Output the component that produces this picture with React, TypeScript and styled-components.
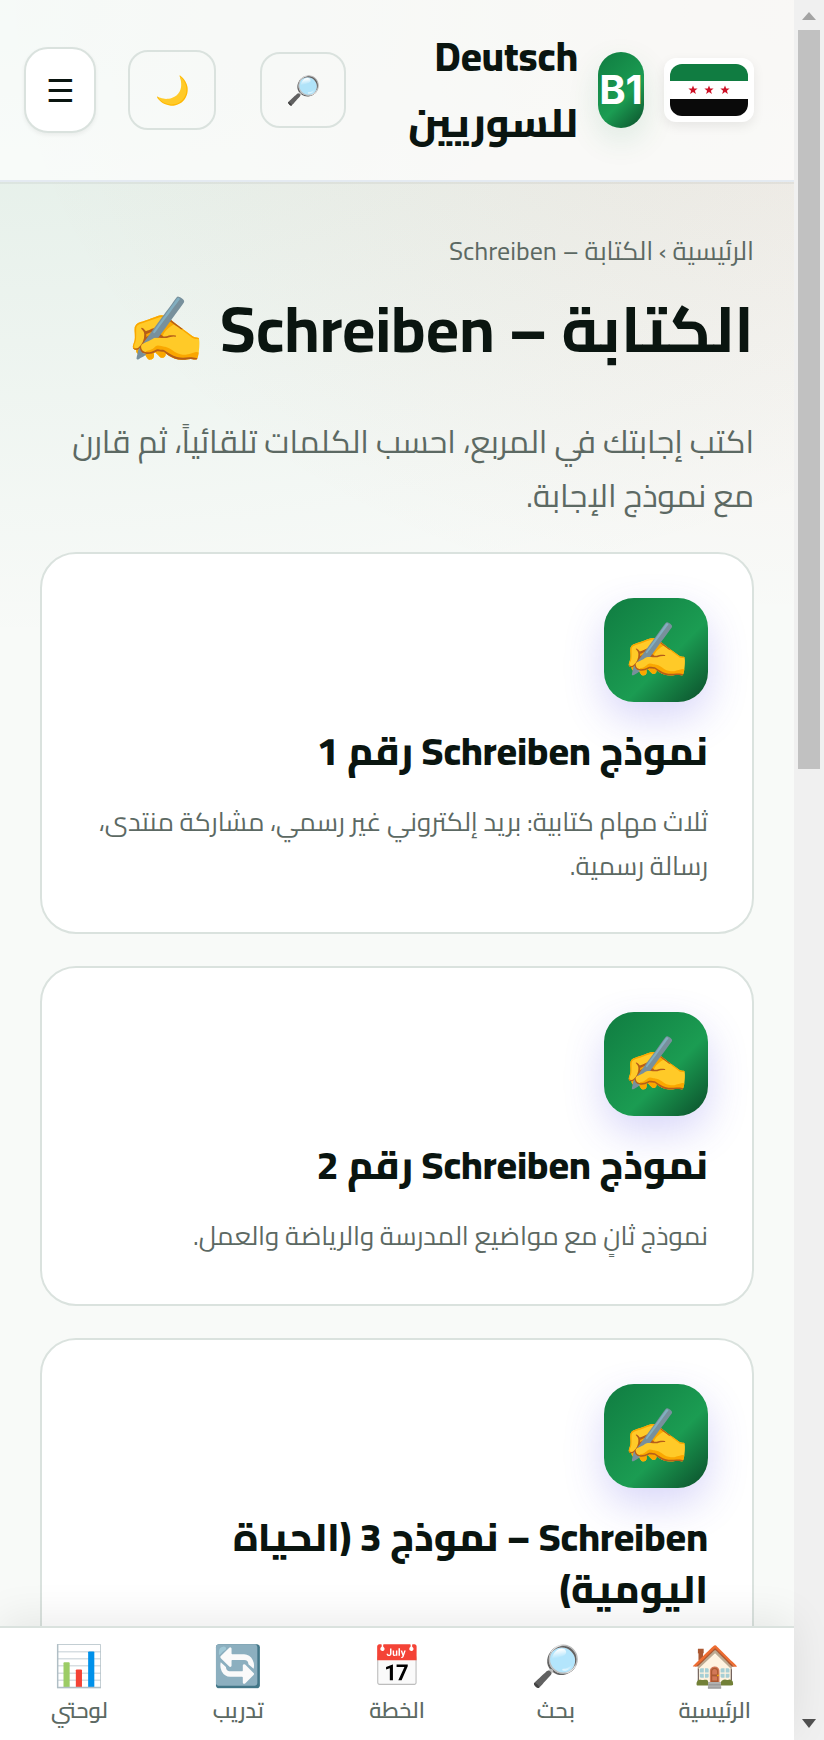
import React from 'react';
import styled, { createGlobalStyle } from 'styled-components';

const GlobalStyle = createGlobalStyle`
  *, *::before, *::after { box-sizing: border-box; }
  body {
    margin: 0;
    font-family: 'Cairo', 'Noto Sans', sans-serif;
    font-size: 32px;
    line-height: 54px;
    color: #0a1510;
    background: #f8faf8;
  }
`;

const brandGradient = 'linear-gradient(135deg, #107c41 0%, #1b9c52 60%, #0b4d2a 100%)';
const line = '#dae2de';
const muted = '#5c6963';

const Shell = styled.div`
  display: grid;
  grid-template-columns: minmax(0, 1fr) 30px;
  height: 100vh;
  overflow: hidden;
`;

const Page = styled.div`
  display: flex;
  flex-direction: column;
  min-height: 0;
  background:
    radial-gradient(800px 620px at 100% 0, rgba(190, 50, 20, 0.08), transparent 100%),
    radial-gradient(1300px 640px at 0 0, rgba(16, 124, 65, 0.1), transparent 100%),
    #f8faf8;
`;

const Header = styled.header`
  display: flex;
  align-items: center;
  flex-shrink: 0;
  padding: 24px 40px 24px 24px;
  background: rgba(255, 255, 255, 0.7);
  border-bottom: 2px solid #e4eaf1;
  box-shadow: 0 2px 0 rgba(15, 23, 20, 0.05);
`;

const Brand = styled.a`
  display: flex;
  align-items: center;
  gap: 20px;
  color: inherit;
  text-decoration: none;
`;

const FlagFrame = styled.span`
  display: flex;
  width: 90px;
  height: 64px;
  padding: 6px;
  border-radius: 12px;
  background: #fff;
  box-shadow: 0 4px 12px rgba(0, 0, 0, 0.08);
  svg { width: 78px; height: 52px; border-radius: 12px; }
`;

const Level = styled.span`
  display: grid;
  place-items: center;
  width: 46px;
  height: 76px;
  border-radius: 24px;
  background: ${brandGradient};
  box-shadow: 0 12px 32px rgba(16, 124, 65, 0.12);
  color: #fff;
  font-family: 'Inter', sans-serif;
  font-size: 40px;
  font-weight: 700;
`;

const BrandName = styled.span`
  width: 178px;
  font-size: 40px;
  font-weight: 800;
  line-height: 66px;
`;

const Actions = styled.div`
  display: flex;
  align-items: center;
  margin-inline-start: auto;
`;

const IconButton = styled.button<{ $w: number; $h: number; $gap?: number; $solid?: boolean }>`
  width: ${p => p.$w}px;
  height: ${p => p.$h}px;
  margin-inline-start: ${p => p.$gap ?? 0}px;
  padding: 0;
  border: 2px solid ${line};
  border-radius: ${p => (p.$solid ? 24 : 20)}px;
  background: ${p => (p.$solid ? '#fff' : 'transparent')};
  box-shadow: ${p => (p.$solid ? '0 2px 4px rgba(0, 0, 0, 0.06)' : 'none')};
  color: inherit;
  font-family: inherit;
  font-size: ${p => (p.$solid ? 32 : 28)}px;
  line-height: 44px;
`;

const Main = styled.main`
  flex: 1;
  min-height: 0;
  overflow: hidden;
  padding: 47px 40px 0;
`;

const Crumbs = styled.nav`
  font-size: 26px;
  line-height: 44px;
  color: ${muted};
  a { color: inherit; text-decoration: none; }
`;

const Heading = styled.h1`
  margin: 14px 0 43px;
  font-size: 64px;
  font-weight: 700;
  line-height: 84px;
`;

const Lead = styled.p`
  margin: 0 0 30px;
  color: ${muted};
`;

const CardList = styled.div`
  display: grid;
  gap: 32px;
`;

const CardLink = styled.a`
  display: block;
  min-height: 340px;
  padding: 44px;
  border: 2px solid ${line};
  border-radius: 36px;
  background: #fff;
  color: inherit;
  text-decoration: none;
`;

const CardIcon = styled.span`
  display: grid;
  place-items: center;
  width: 104px;
  height: 104px;
  border-radius: 30px;
  background: ${brandGradient};
  box-shadow: 0 16px 40px rgba(79, 70, 229, 0.22);
  font-size: 54px;
`;

const CardTitle = styled.h2`
  margin: 23px 0;
  font-size: 39px;
  font-weight: 800;
  line-height: 52px;
`;

const CardText = styled.p`
  margin: 0;
  font-size: 26px;
  line-height: 44px;
  color: ${muted};
`;

const BottomNav = styled.nav`
  position: relative;
  display: grid;
  grid-template-columns: repeat(5, minmax(0, 1fr));
  flex-shrink: 0;
  padding: 12px 0;
  border-top: 2px solid ${line};
  background: #fff;
  box-shadow: 0 -8px 40px rgba(0, 0, 0, 0.08);
`;

const Tab = styled.a`
  display: flex;
  flex-direction: column;
  align-items: center;
  color: ${muted};
  text-decoration: none;
  font-size: 22px;
  font-weight: 600;
  line-height: 36px;
`;

const TabIcon = styled.span`
  font-size: 40px;
  line-height: 52px;
`;

const ScrollTrack = styled.div`
  display: flex;
  flex-direction: column;
  padding: 0 4px;
  background: #f0f0f0;
`;

const ScrollArrow = styled.svg`
  width: 22px;
  height: 30px;
  flex-shrink: 0;
`;

const ScrollRail = styled.div`
  flex: 1;
`;

const ScrollThumb = styled.div`
  height: 44%;
  background: #c1c1c1;
`;

const Star = ({ x }: { x: number }) => (
  <path
    transform={`translate(${x} 26)`}
    d="M0-4.6 1.2-1.4 4.6-1.4 1.9.7 2.9 4 0 2 -2.9 4 -1.9.7 -4.6-1.4 -1.2-1.4Z"
    fill="#ce1126"
  />
);

const cards = [
  { title: 'نموذج Schreiben رقم 1', text: 'ثلاث مهام كتابية: بريد إلكتروني غير رسمي، مشاركة منتدى، رسالة رسمية.' },
  { title: 'نموذج Schreiben رقم 2', text: 'نموذج ثانٍ مع مواضيع المدرسة والرياضة والعمل.' },
  { title: 'Schreiben – نموذج 3 (الحياة اليومية)', text: '' },
];

const tabs = [
  { icon: '🏠', label: 'الرئيسية' },
  { icon: '🔎', label: 'بحث' },
  { icon: '📅', label: 'الخطة' },
  { icon: '🔄', label: 'تدريب' },
  { icon: '📊', label: 'لوحتي' },
];

export default function App() {
  return (
    <>
      <GlobalStyle />
      <Shell>
        <Page dir="rtl" lang="ar">
          <Header>
            <Brand href="#">
              <FlagFrame>
                <svg viewBox="0 0 78 52" role="img" aria-label="علم سوريا">
                  <rect width="78" height="52" fill="#fff" />
                  <rect width="78" height="17" fill="#107c41" />
                  <rect y="35" width="78" height="17" fill="#0a0a0a" />
                  <Star x={23} />
                  <Star x={39} />
                  <Star x={55} />
                </svg>
              </FlagFrame>
              <Level>B1</Level>
              <BrandName>Deutsch للسوريين</BrandName>
            </Brand>
            <Actions>
              <IconButton $w={86} $h={76} aria-label="بحث">🔎</IconButton>
              <IconButton $w={88} $h={80} $gap={44} aria-label="الوضع الليلي">🌙</IconButton>
              <IconButton $w={72} $h={86} $gap={32} $solid aria-label="القائمة">☰</IconButton>
            </Actions>
          </Header>
          <Main>
            <Crumbs>
              <a href="#">الرئيسية</a> › الكتابة – Schreiben
            </Crumbs>
            <Heading>الكتابة – Schreiben ✍️</Heading>
            <Lead>اكتب إجابتك في المربع، احسب الكلمات تلقائياً، ثم قارن مع نموذج الإجابة.</Lead>
            <CardList>
              {cards.map(card => (
                <CardLink href="#" key={card.title}>
                  <CardIcon>✍️</CardIcon>
                  <CardTitle>{card.title}</CardTitle>
                  {card.text && <CardText>{card.text}</CardText>}
                </CardLink>
              ))}
            </CardList>
          </Main>
          <BottomNav>
            {tabs.map(tab => (
              <Tab href="#" key={tab.label}>
                <TabIcon>{tab.icon}</TabIcon>
                {tab.label}
              </Tab>
            ))}
          </BottomNav>
        </Page>
        <ScrollTrack aria-hidden="true">
          <ScrollArrow viewBox="0 0 22 30"><path d="M4 20 11 12 18 20Z" fill="#a3a3a3" /></ScrollArrow>
          <ScrollRail><ScrollThumb /></ScrollRail>
          <ScrollArrow viewBox="0 0 22 30"><path d="M4 9 11 18 18 9Z" fill="#505050" /></ScrollArrow>
        </ScrollTrack>
      </Shell>
    </>
  );
}
